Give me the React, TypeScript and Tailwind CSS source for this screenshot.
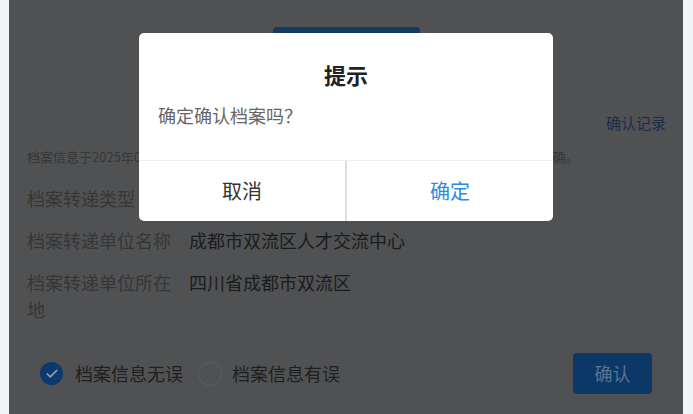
import { Check } from "lucide-react";

const rows = [
  { label: "档案转递类型", value: "" },
  { label: "档案转递单位名称", value: "成都市双流区人才交流中心" },
  { label: "档案转递单位所在地", value: "四川省成都市双流区" },
];

export default function App() {
  return (
    <div
      className="w-[693px] h-[414px] bg-[#f3f4f6] flex overflow-hidden"
      style={{ fontFamily: '"Noto Sans CJK SC", "Noto Sans", sans-serif' }}
    >
      {/* dimmed page under the dialog */}
      <div className="relative ml-[9px] w-[674px] h-full bg-[#505152] flex flex-col">
        <div className="mx-auto mt-[27px] w-[147px] h-[40px] rounded-[4px] bg-[#123a62]" />

        <div className="mt-[46px] pr-[17px] text-right text-[15px] leading-[20px] text-[#1a2e4a]">
          确认记录
        </div>

        <div className="mt-[14px] pl-[18px] text-[13px] leading-[20px] text-[#373737] whitespace-nowrap">
          档案信息于2025年03月15日由成都市双流区人才交流中心转入，请仔细核对档案信息是否准确。
        </div>

        <div className="mt-[18px] pl-[18px] flex flex-col gap-[15px]">
          {rows.map((row) => (
            <div key={row.label} className="flex text-[18px] leading-[27px]">
              <div className="w-[150px] shrink-0 text-[#363636]">{row.label}</div>
              <div className="ml-[12px] text-[#1b1b1b]">{row.value}</div>
            </div>
          ))}
        </div>

        <div className="mt-[30px] pl-[31px] pr-[31px] flex items-center">
          <div className="w-[23px] h-[23px] rounded-full bg-[#0c3a6c] flex items-center justify-center">
            <Check size={14} strokeWidth={3} color="#8d9fb3" />
          </div>
          <span className="ml-[12px] text-[18px] text-[#1f1f1f]">档案信息无误</span>
          <div className="ml-[15px] w-[24px] h-[24px] rounded-full border border-[#5d5e5f]" />
          <span className="ml-[10px] text-[18px] text-[#1f1f1f]">档案信息有误</span>
          <div className="ml-auto w-[79px] h-[41px] rounded-[4px] bg-[#0b3867] flex items-center justify-center text-[18px] text-[#5b7390]">
            确认
          </div>
        </div>

        {/* dialog */}
        <div className="absolute left-[130px] top-[33px] w-[414px] h-[188px] bg-white rounded-[5px] flex flex-col overflow-hidden">
          <div className="pt-[27px] text-center text-[22px] leading-[28px] font-bold text-[#222]">提示</div>
          <div className="mt-[15px] pl-[19px] text-[18px] leading-[24px] text-[#666]">确定确认档案吗？</div>
          <div className="mt-auto h-[61px] border-t border-[#eeeeee] flex">
            <div className="w-[208px] flex items-center justify-center text-[20px] text-[#333] border-r-2 border-[#dedede]">
              取消
            </div>
            <div className="flex-1 flex items-center justify-center text-[20px] text-[#2f8ae5]">确定</div>
          </div>
        </div>
      </div>
    </div>
  );
}
